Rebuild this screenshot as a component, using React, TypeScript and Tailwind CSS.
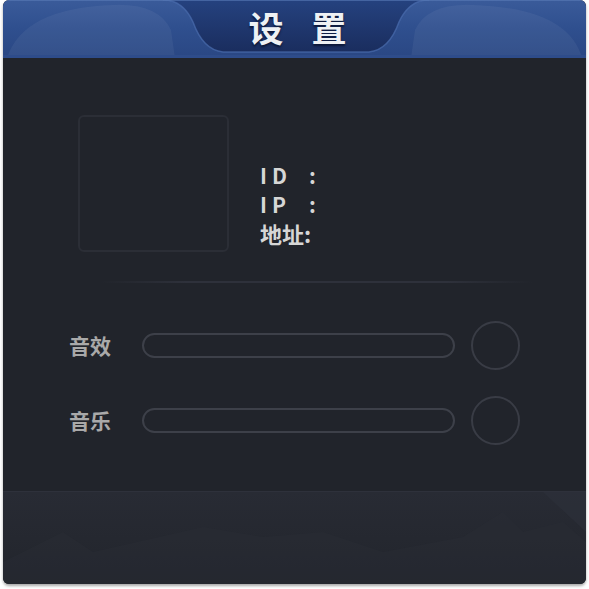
import React from 'react'

const cjk = '"Noto Sans CJK SC", "Noto Sans", sans-serif'

function HeaderArt() {
  return (
    <svg className="absolute inset-0" width="583" height="58" viewBox="0 0 583 58">
      <defs>
        <linearGradient id="hbase" x1="0" y1="0" x2="0" y2="1">
          <stop offset="0" stopColor="#3a5b9a" />
          <stop offset="0.5" stopColor="#2f4f8e" />
          <stop offset="1" stopColor="#2a4783" />
        </linearGradient>
        <linearGradient id="htab" x1="0" y1="0" x2="0" y2="1">
          <stop offset="0" stopColor="#25427f" />
          <stop offset="1" stopColor="#1a2d5e" />
        </linearGradient>
        <radialGradient id="hglow" cx="0.5" cy="0" r="0.5">
          <stop offset="0" stopColor="#4f86c4" stopOpacity="0.6" />
          <stop offset="1" stopColor="#4f86c4" stopOpacity="0" />
        </radialGradient>
      </defs>
      <path d="M0 6 Q0 0 6 0 H577 Q583 0 583 6 V58 H0 Z" fill="url(#hbase)" />
      <path d="M4 58 Q20 8 110 5 Q155 3 168 30 L172 58 Z" fill="#ffffff" opacity="0.05" />
      <path d="M579 58 Q565 8 470 5 Q425 3 412 30 L408 58 Z" fill="#ffffff" opacity="0.05" />
      <path
        d="M160 0 Q180 0 190 22 Q200 50 220 52 H366 Q386 50 396 22 Q406 0 426 0 Z"
        fill="url(#htab)"
      />
      <path
        d="M160 0 Q180 0 190 22 Q200 50 220 52 H366 Q386 50 396 22 Q406 0 426 0"
        fill="none"
        stroke="#4a6cae"
        strokeWidth="1.5"
        opacity="0.7"
      />
      <ellipse cx="292" cy="0" rx="120" ry="14" fill="url(#hglow)" />
      <rect x="0" y="55" width="583" height="3" fill="#2e4c8a" />
      <rect x="0" y="0" width="583" height="1" fill="#5a7cb8" opacity="0.6" />
    </svg>
  )
}

function FooterArt() {
  return (
    <svg className="absolute inset-0" width="583" height="93" viewBox="0 0 583 93">
      <path
        d="M0 70 L60 40 L90 60 L200 35 L260 45 L320 40 L380 60 L460 45 L500 20 L520 40 L560 30 L583 50 V93 H0 Z"
        fill="#2a2d37"
        opacity="0.35"
      />
      <path d="M540 0 L583 0 L583 40 Z" fill="#2e313b" opacity="0.5" />
    </svg>
  )
}

function SliderRow({ label }: { label: string }) {
  return (
    <div className="flex items-center">
      <div
        className="w-[44px] text-[21px] font-bold text-[#a9a9a9] leading-none"
        style={{ fontFamily: cjk }}
      >
        {label}
      </div>
      <div className="ml-[29px] h-[25px] w-[313px] rounded-full border-2 border-[#3d4049]" />
      <div className="ml-[16px] h-[49px] w-[49px] rounded-full border-2 border-[#393c45]" />
    </div>
  )
}

export default function App() {
  return (
    <div className="w-[589px] h-[589px] bg-white">
      <div className="ml-[3px] w-[583px] h-[584px] flex flex-col rounded-md overflow-hidden bg-[#21242b] shadow-[0_2px_3px_rgba(0,0,0,0.35)]">
        {/* Header */}
        <div className="relative h-[58px] shrink-0">
          <HeaderArt />
          <div
            className="relative flex justify-center gap-[28px] pt-[5px] text-[35px] font-bold leading-[44px] text-[#eef1f4] pl-[6px]"
            style={{ fontFamily: cjk, textShadow: '0 2px 2px rgba(10,20,50,0.9)' }}
          >
            <span>设</span>
            <span>置</span>
          </div>
        </div>

        {/* Body */}
        <div className="flex-1 flex flex-col">
          <div className="flex items-end pl-[75px] pt-[57px]">
            <div className="w-[151px] h-[137px] rounded-md border-2 border-[#2b2e36]" />
            <div
              className="ml-[31px] mb-[6px] flex flex-col text-[21px] font-bold text-[#d6d6d6]"
              style={{ fontFamily: cjk }}
            >
              <div className="flex h-[30px] items-center">
                <span className="w-[49px] tracking-[5px]">ID</span>
                <span>:</span>
              </div>
              <div className="flex h-[28px] items-center">
                <span className="w-[49px] tracking-[5px]">IP</span>
                <span>:</span>
              </div>
              <div className="flex h-[27px] items-center">
                <span className="text-[22px] leading-none">地址:</span>
              </div>
            </div>
          </div>

          <div className="ml-[97px] mt-[29px] h-[2px] w-[433px] bg-[linear-gradient(to_right,transparent,#2e313b_20%,#2e313b_80%,transparent)]" />

          <div className="flex flex-col gap-[26px] pl-[66px] pt-[38px]">
            <SliderRow label="音效" />
            <SliderRow label="音乐" />
          </div>
        </div>

        {/* Footer */}
        <div className="relative h-[93px] shrink-0 border-t border-[#2e313b] bg-gradient-to-b from-[#282b34] to-[#22252c]">
          <FooterArt />
        </div>
      </div>
    </div>
  )
}
